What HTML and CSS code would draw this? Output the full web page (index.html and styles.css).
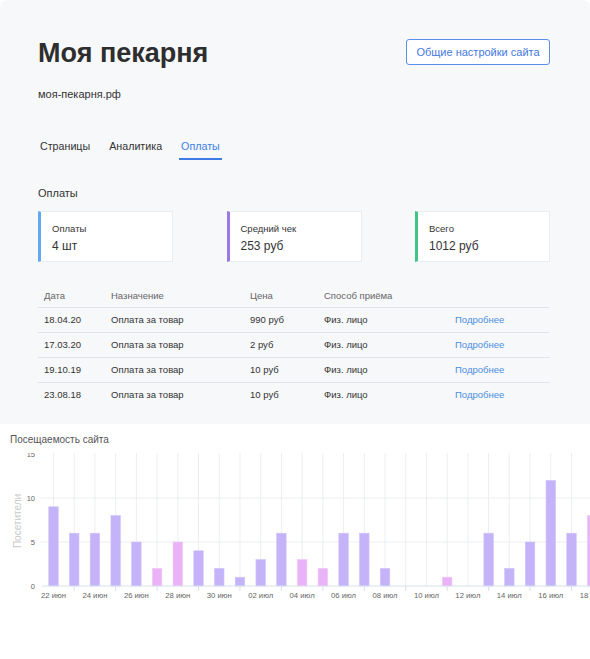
FILE: index.html
```html
<!DOCTYPE html>
<html lang="ru">
<head>
<meta charset="utf-8">
<title>Моя пекарня</title>
<link rel="stylesheet" href="styles.css">
</head>
<body>
<div class="panel">
  <header class="header">
    <h1 class="title">Моя пекарня</h1>
    <button class="settings-btn">Общие настройки сайта</button>
  </header>
  <div class="domain">моя-пекарня.рф</div>
  <nav class="tabs">
    <span class="tab">Страницы</span>
    <span class="tab">Аналитика</span>
    <span class="tab tab-active">Оплаты</span>
  </nav>
  <h2 class="section-title">Оплаты</h2>
  <div class="stats">
    <div class="stat stat-blue">
      <div class="stat-label">Оплаты</div>
      <div class="stat-value">4 шт</div>
    </div>
    <div class="stat stat-purple">
      <div class="stat-label">Средний чек</div>
      <div class="stat-value">253 руб</div>
    </div>
    <div class="stat stat-green">
      <div class="stat-label">Всего</div>
      <div class="stat-value">1012 руб</div>
    </div>
  </div>
  <table class="payments">
    <colgroup>
      <col class="c1"><col class="c2"><col class="c3"><col class="c4"><col class="c5">
    </colgroup>
    <thead>
      <tr><th>Дата</th><th>Назначение</th><th>Цена</th><th>Способ приёма</th><th></th></tr>
    </thead>
    <tbody>
      <tr><td>18.04.20</td><td>Оплата за товар</td><td>990 руб</td><td>Физ. лицо</td><td><a class="more">Подробнее</a></td></tr>
      <tr><td>17.03.20</td><td>Оплата за товар</td><td>2 руб</td><td>Физ. лицо</td><td><a class="more">Подробнее</a></td></tr>
      <tr><td>19.10.19</td><td>Оплата за товар</td><td>10 руб</td><td>Физ. лицо</td><td><a class="more">Подробнее</a></td></tr>
      <tr><td>23.08.18</td><td>Оплата за товар</td><td>10 руб</td><td>Физ. лицо</td><td><a class="more">Подробнее</a></td></tr>
    </tbody>
  </table>
</div>

<section class="traffic">
  <div class="traffic-title">Посещаемость сайта</div>
  <svg class="chart" width="590" height="150" viewBox="0 0 590 150">
    <g class="grid">
      <line x1="40" y1="45" x2="590" y2="45"/>
      <line x1="40" y1="89" x2="590" y2="89"/>
      <line x1="53.5" y1="0" x2="53.5" y2="133"/>
      <line x1="74.22" y1="0" x2="74.22" y2="133"/>
      <line x1="94.94" y1="0" x2="94.94" y2="133"/>
      <line x1="115.66" y1="0" x2="115.66" y2="133"/>
      <line x1="136.38" y1="0" x2="136.38" y2="133"/>
      <line x1="157.1" y1="0" x2="157.1" y2="133"/>
      <line x1="177.82" y1="0" x2="177.82" y2="133"/>
      <line x1="198.54" y1="0" x2="198.54" y2="133"/>
      <line x1="219.26" y1="0" x2="219.26" y2="133"/>
      <line x1="239.98" y1="0" x2="239.98" y2="133"/>
      <line x1="260.7" y1="0" x2="260.7" y2="133"/>
      <line x1="281.42" y1="0" x2="281.42" y2="133"/>
      <line x1="302.14" y1="0" x2="302.14" y2="133"/>
      <line x1="322.86" y1="0" x2="322.86" y2="133"/>
      <line x1="343.58" y1="0" x2="343.58" y2="133"/>
      <line x1="364.3" y1="0" x2="364.3" y2="133"/>
      <line x1="385.02" y1="0" x2="385.02" y2="133"/>
      <line x1="405.74" y1="0" x2="405.74" y2="133"/>
      <line x1="426.46" y1="0" x2="426.46" y2="133"/>
      <line x1="447.18" y1="0" x2="447.18" y2="133"/>
      <line x1="467.9" y1="0" x2="467.9" y2="133"/>
      <line x1="488.62" y1="0" x2="488.62" y2="133"/>
      <line x1="509.34" y1="0" x2="509.34" y2="133"/>
      <line x1="530.06" y1="0" x2="530.06" y2="133"/>
      <line x1="550.78" y1="0" x2="550.78" y2="133"/>
      <line x1="571.5" y1="0" x2="571.5" y2="133"/>
    </g>
    <g class="ylabels">
      <text x="35" y="3.7">15</text>
      <text x="35" y="47.7">10</text>
      <text x="35" y="91.7">5</text>
      <text x="35" y="135.7">0</text>
    </g>
    <text class="ytitle" x="17.7" y="68" transform="rotate(-90 17.7 68)">Посетители</text>
    <g class="bars">
      <rect class="wd" x="48.75" y="53.8" width="9.5" height="79.2"/>
      <rect class="wd" x="69.47" y="80.2" width="9.5" height="52.8"/>
      <rect class="wd" x="90.19" y="80.2" width="9.5" height="52.8"/>
      <rect class="wd" x="110.91" y="62.6" width="9.5" height="70.4"/>
      <rect class="wd" x="131.63" y="89" width="9.5" height="44"/>
      <rect class="we" x="152.35" y="115.4" width="9.5" height="17.6"/>
      <rect class="we" x="173.07" y="89" width="9.5" height="44"/>
      <rect class="wd" x="193.79" y="97.8" width="9.5" height="35.2"/>
      <rect class="wd" x="214.51" y="115.4" width="9.5" height="17.6"/>
      <rect class="wd" x="235.23" y="124.2" width="9.5" height="8.8"/>
      <rect class="wd" x="255.95" y="106.6" width="9.5" height="26.4"/>
      <rect class="wd" x="276.67" y="80.2" width="9.5" height="52.8"/>
      <rect class="we" x="297.39" y="106.6" width="9.5" height="26.4"/>
      <rect class="we" x="318.11" y="115.4" width="9.5" height="17.6"/>
      <rect class="wd" x="338.83" y="80.2" width="9.5" height="52.8"/>
      <rect class="wd" x="359.55" y="80.2" width="9.5" height="52.8"/>
      <rect class="wd" x="380.27" y="115.4" width="9.5" height="17.6"/>
      <rect class="we" x="442.43" y="124.2" width="9.5" height="8.8"/>
      <rect class="wd" x="483.87" y="80.2" width="9.5" height="52.8"/>
      <rect class="wd" x="504.59" y="115.4" width="9.5" height="17.6"/>
      <rect class="wd" x="525.31" y="89" width="9.5" height="44"/>
      <rect class="wd" x="546.03" y="27.4" width="9.5" height="105.6"/>
      <rect class="wd" x="566.75" y="80.2" width="9.5" height="52.8"/>
      <rect class="we" x="587.47" y="62.6" width="9.5" height="70.4"/>
    </g>
    <g class="axis">
      <line x1="42" y1="133" x2="590" y2="133"/>
      <line x1="74.22" y1="133" x2="74.22" y2="138"/>
      <line x1="115.66" y1="133" x2="115.66" y2="138"/>
      <line x1="157.1" y1="133" x2="157.1" y2="138"/>
      <line x1="198.54" y1="133" x2="198.54" y2="138"/>
      <line x1="239.98" y1="133" x2="239.98" y2="138"/>
      <line x1="281.42" y1="133" x2="281.42" y2="138"/>
      <line x1="322.86" y1="133" x2="322.86" y2="138"/>
      <line x1="364.3" y1="133" x2="364.3" y2="138"/>
      <line x1="405.74" y1="133" x2="405.74" y2="138"/>
      <line x1="447.18" y1="133" x2="447.18" y2="138"/>
      <line x1="488.62" y1="133" x2="488.62" y2="138"/>
      <line x1="530.06" y1="133" x2="530.06" y2="138"/>
      <line x1="571.5" y1="133" x2="571.5" y2="138"/>
    </g>
    <g class="xlabels">
      <text x="53.5" y="145.4">22 июн</text>
      <text x="94.94" y="145.4">24 июн</text>
      <text x="136.38" y="145.4">26 июн</text>
      <text x="177.82" y="145.4">28 июн</text>
      <text x="219.26" y="145.4">30 июн</text>
      <text x="260.7" y="145.4">02 июл</text>
      <text x="302.14" y="145.4">04 июл</text>
      <text x="343.58" y="145.4">06 июл</text>
      <text x="385.02" y="145.4">08 июл</text>
      <text x="426.46" y="145.4">10 июл</text>
      <text x="467.9" y="145.4">12 июл</text>
      <text x="509.34" y="145.4">14 июл</text>
      <text x="550.78" y="145.4">16 июл</text>
      <text x="592.22" y="145.4">18 июл</text>
    </g>
  </svg>
</section>
</body>
</html>
```

FILE: styles.css
```css
* {
  box-sizing: border-box;
}

html, body {
  margin: 0;
  padding: 0;
  background: #ffffff;
}

body {
  width: 590px;
  font-family: "Liberation Sans", Arial, "Noto Sans", sans-serif;
  color: #333333;
  overflow: hidden;
}

.panel {
  background: #f7f8fa;
  border-radius: 8px 8px 0 0;
  padding: 37px 40px 16px 38px;
}

.header {
  display: flex;
  justify-content: space-between;
  align-items: flex-start;
}

.title {
  margin: 0;
  font-size: 27px;
  line-height: 32px;
  font-weight: bold;
  color: #2e2e2e;
}

.settings-btn {
  margin-top: 2px;
  width: 144px;
  height: 26px;
  padding: 0;
  background: #ffffff;
  border: 1px solid #5c8fec;
  border-radius: 3px;
  color: #4478e0;
  font-family: inherit;
  font-size: 11px;
  line-height: 24px;
}

.domain {
  margin-top: 18px;
  font-size: 11px;
  line-height: 14px;
  color: #333333;
}

.tabs {
  display: flex;
  gap: 15px;
  margin-top: 38px;
}

.tab {
  padding: 0 2px 5px;
  font-size: 10.7px;
  line-height: 14px;
  color: #333333;
  border-bottom: 2px solid transparent;
}

.tab-active {
  color: #3d7ee8;
  border-bottom-color: #3d7be6;
}

.section-title {
  margin: 26px 0 0;
  font-size: 11px;
  line-height: 14px;
  font-weight: normal;
  color: #333333;
}

.stats {
  display: grid;
  grid-template-columns: repeat(3, 135px);
  column-gap: 53.5px;
  margin-top: 11px;
}

.stat {
  background: #ffffff;
  border: 1px solid #e8edf2;
  border-left: 3px solid #63a9f2;
  padding: 10px 8px 7px 11px;
}

.stat-blue { border-left-color: #63a9f2; }
.stat-purple { border-left-color: #9a79e4; }
.stat-green { border-left-color: #41c486; }

.stat-label {
  font-size: 9.5px;
  line-height: 13px;
  color: #333333;
}

.stat-value {
  margin-top: 3px;
  font-size: 12px;
  line-height: 16px;
  color: #333333;
}

.payments {
  width: 512px;
  margin-top: 22px;
  border-collapse: collapse;
  table-layout: fixed;
  font-size: 9.5px;
}

.c1 { width: 67px; }
.c2 { width: 139px; }
.c3 { width: 74px; }
.c4 { width: 131px; }
.c5 { width: 101px; }

.payments th {
  height: 23px;
  padding: 0 0 0 6px;
  text-align: left;
  font-weight: normal;
  color: #666666;
  line-height: 23px;
  border-bottom: 1px solid #e1e4e8;
}

.payments td {
  height: 25px;
  padding: 0 0 0 6px;
  line-height: 24px;
  color: #333333;
  border-bottom: 1px solid #e1e4e8;
}

.payments tbody tr:last-child td {
  border-bottom: none;
}

.more {
  color: #4a8fe2;
  text-decoration: none;
}

.traffic {
  padding-top: 9px;
  background: #ffffff;
}

.traffic-title {
  padding-left: 10px;
  font-size: 10px;
  line-height: 14px;
  color: #555555;
}

.chart {
  display: block;
  margin-top: 6px;
  overflow: hidden;
}

.grid line {
  stroke: #eceef1;
  stroke-width: 1;
}

.axis line {
  stroke: #d6e1ec;
  stroke-width: 1;
}

.bars .wd {
  fill: #c4b3f8;
  stroke: #d0c3fa;
  stroke-width: 0.6;
}

.bars .we {
  fill: #eab3f7;
  stroke: #f0c6f9;
  stroke-width: 0.6;
}

.ylabels text {
  font-family: "Liberation Sans", Arial, sans-serif;
  font-size: 7.5px;
  fill: #666666;
  text-anchor: end;
}

.xlabels text {
  font-family: "Liberation Sans", Arial, sans-serif;
  font-size: 7.7px;
  fill: #666666;
  text-anchor: middle;
}

.ytitle {
  font-family: "Liberation Sans", Arial, sans-serif;
  font-size: 10px;
  fill: #cacaca;
  text-anchor: middle;
  dominant-baseline: central;
}
```
